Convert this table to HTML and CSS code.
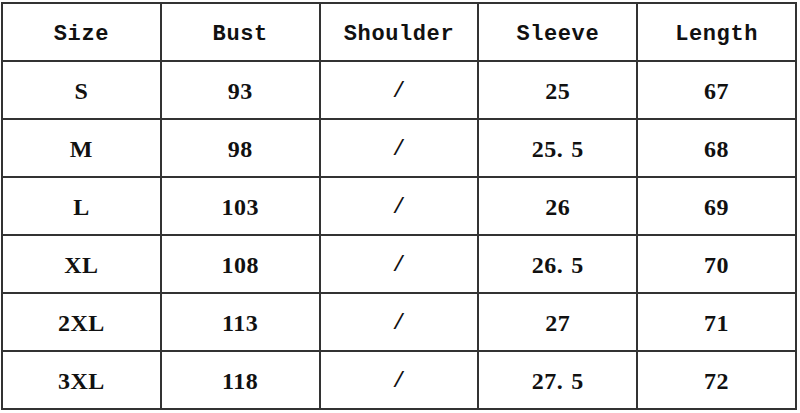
FILE: index.html
```html
<!DOCTYPE html>
<html>
<head>
<meta charset="utf-8">
<link rel="stylesheet" href="styles.css">
</head>
<body>
<table class="chart">
  <thead>
    <tr><th>Size</th><th>Bust</th><th>Shoulder</th><th>Sleeve</th><th>Length</th></tr>
  </thead>
  <tbody>
    <tr><td>S</td><td>93</td><td class="slash">/</td><td>25</td><td>67</td></tr>
    <tr><td>M</td><td>98</td><td class="slash">/</td><td>25<span class="dot">.</span>5</td><td>68</td></tr>
    <tr><td>L</td><td>103</td><td class="slash">/</td><td>26</td><td>69</td></tr>
    <tr><td>XL</td><td>108</td><td class="slash">/</td><td>26<span class="dot">.</span>5</td><td>70</td></tr>
    <tr><td>2XL</td><td>113</td><td class="slash">/</td><td>27</td><td>71</td></tr>
    <tr><td>3XL</td><td>118</td><td class="slash">/</td><td>27<span class="dot">.</span>5</td><td>72</td></tr>
  </tbody>
</table>
</body>
</html>
```
FILE: styles.css
```css
html, body {
  margin: 0;
  padding: 0;
  background: #ffffff;
}
body {
  padding: 2px 0 0 1px;
}
.chart {
  border-collapse: collapse;
  table-layout: fixed;
  width: 796px;
  height: 406px;
  color: #111;
}
.chart th,
.chart td {
  border: 2px solid #333;
  text-align: center;
  vertical-align: middle;
  width: 20%;
  padding: 0;
}
.chart tr {
  height: 58px;
}
.chart th {
  font-family: "Liberation Mono", "DejaVu Sans Mono", monospace;
  font-weight: bold;
  font-size: 22px;
  letter-spacing: 0.6px;
  padding-top: 4px;
}
.chart td {
  font-family: "Liberation Serif", "DejaVu Serif", serif;
  font-weight: bold;
  font-size: 24px;
  letter-spacing: 0.5px;
  padding-top: 3px;
}
.chart td.slash {
  font-family: "Liberation Mono", monospace;
  font-weight: normal;
  font-size: 22px;
}
.dot {
  margin-right: 8px;
}
```
